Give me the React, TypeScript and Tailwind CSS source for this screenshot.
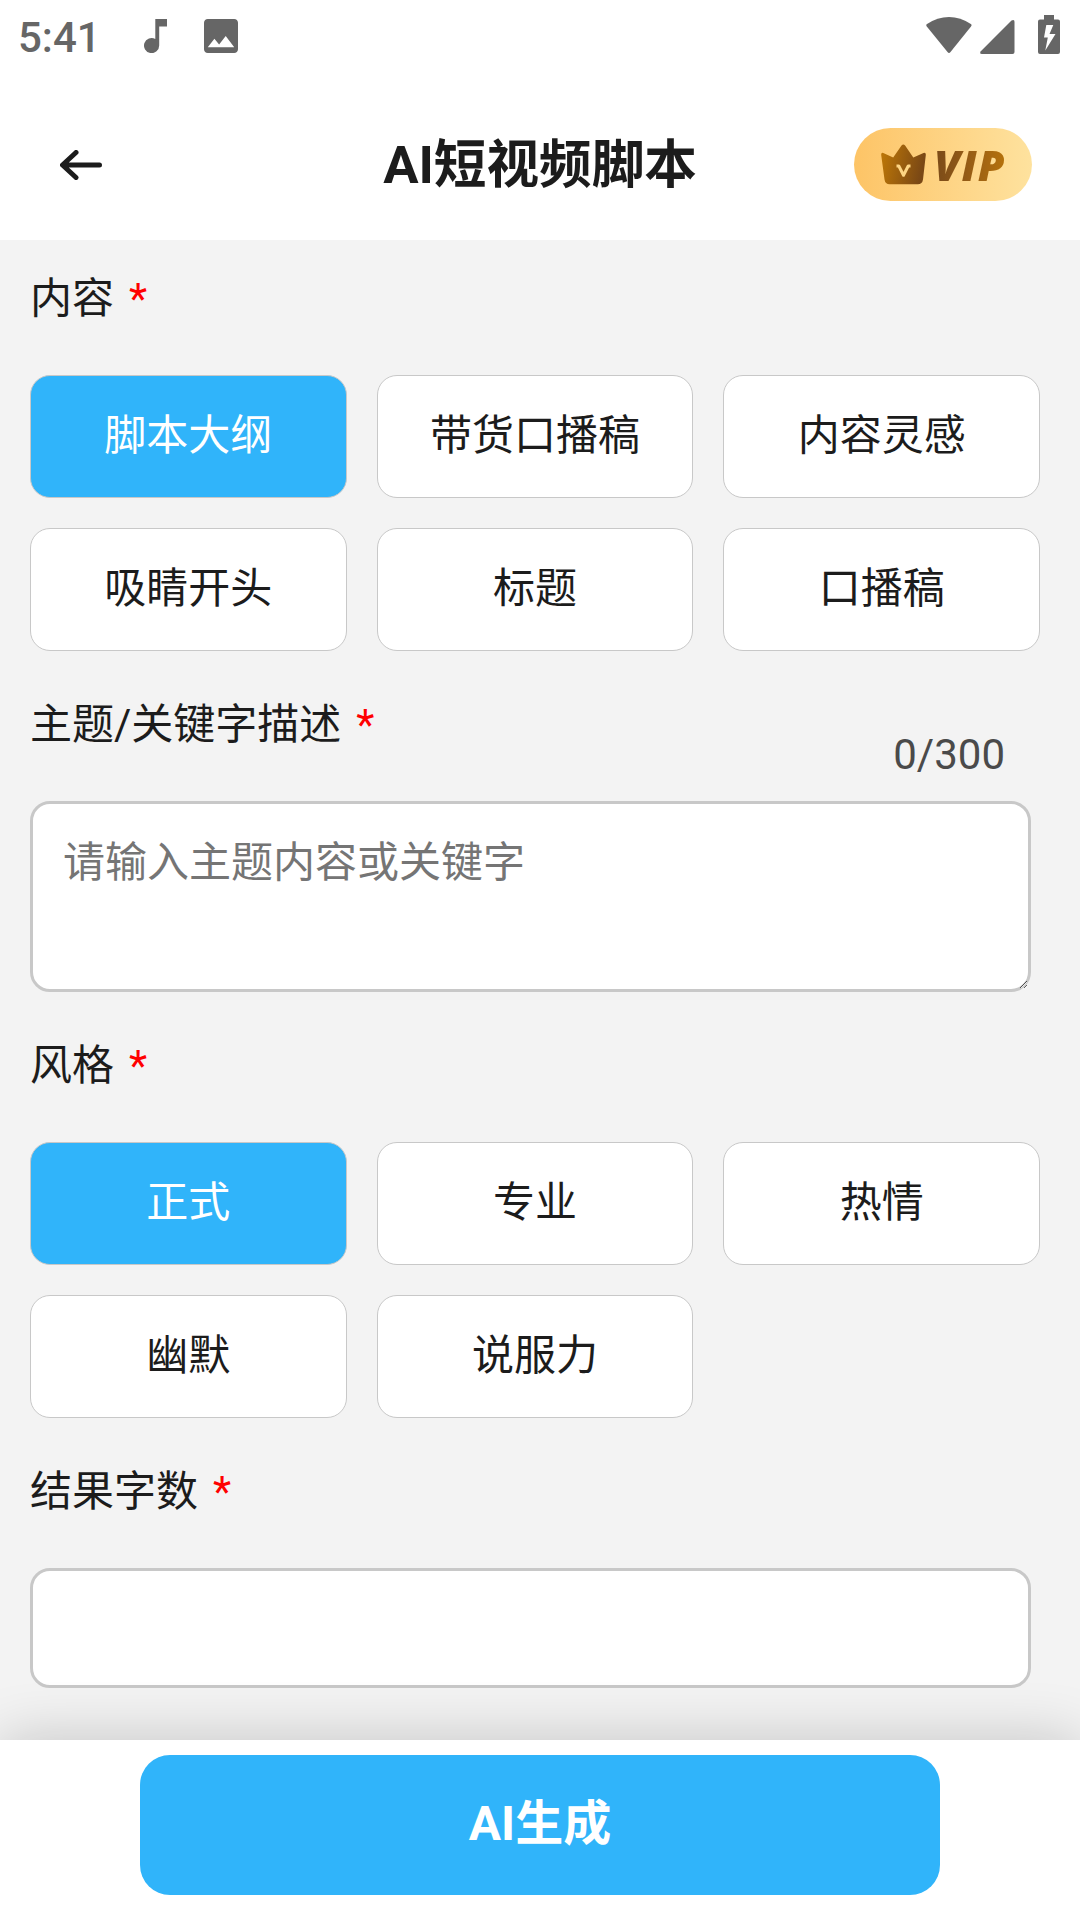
import clsx from "clsx";
import { useState } from "react";

const contentTypes = ["脚本大纲", "带货口播稿", "内容灵感", "吸睛开头", "标题", "口播稿"];
const styles = ["正式", "专业", "热情", "幽默", "说服力"];

const StatusBar = () => (
  <div className="flex h-[72px] items-start justify-between pl-[18px] pr-5 text-[#666666]">
    <div className="flex items-start">
      <p className="mt-[13px] text-[42px] font-medium leading-[49px]">5:41</p>
      <svg className="ml-[43px] mt-[19px]" width="23" height="34" viewBox="0 0 23 34" fill="currentColor">
        <path d="M11.3 0V19.9A7.6 7.6 0 1 0 15.2 26.5V7.6H23V0Z" />
      </svg>
      <svg className="ml-[37px] mt-[19px]" width="34" height="34" viewBox="3 3 18 18" fill="currentColor">
        <path d="M21 19V5c0-1.1-.9-2-2-2H5c-1.1 0-2 .9-2 2v14c0 1.1.9 2 2 2h14c1.1 0 2-.9 2-2zM8.5 13.5l2.5 3.01L14.5 12l4.5 6H5l3.5-4.5z" />
      </svg>
    </div>
    <div className="flex items-start">
      <svg className="mt-[17px]" width="46" height="36" viewBox="0 0 46 36" fill="currentColor">
        <path d="M.8 9.5Q-.4 8 1 7C14.5-2.3 31.5-2.3 44.8 7q1.4 1 .2 2.5L24.5 35q-1.5 1.8-3 0Z" />
      </svg>
      <svg className="ml-2 mt-5" width="35" height="34" viewBox="0 0 35 34" fill="currentColor">
        <path d="M31.5.6Q34.5-1 34.5 2V32q0 2-2 2H2Q-1 34 .8 31.2Z" />
      </svg>
      <svg className="ml-[23px] mt-[15px]" width="22" height="39" viewBox="0 0 22 39" fill="currentColor">
        <path
          fillRule="evenodd"
          d="M6 0h10v4.5h4q2 0 2 2V37q0 2-2 2H2q-2 0-2-2V6.5q0-2 2-2h4ZM8.3 10 6 22.5h3.8L7.3 35.5 17.5 19h-6L15.3 10Z"
        />
      </svg>
    </div>
  </div>
);

const VipBadge = () => (
  <div className="flex h-[73px] w-[178px] items-center rounded-full bg-gradient-to-r from-[#fdc466] to-[#fee29e] pl-[27px]">
    <svg className="shrink-0" width="45" height="41" viewBox="0 0 45 41">
      <defs>
        <linearGradient id="crown" x1="0" x2="1" y1="0" y2="0.2">
          <stop offset="0.1" stopColor="#b97408" />
          <stop offset="1" stopColor="#7a4815" />
        </linearGradient>
      </defs>
      <path
        fill="url(#crown)"
        d="M.2 11Q0 8.2 2.3 9L12.2 13.5 20.5 1.6q1.8-2.4 3.6 0L32.3 13.5 42.5 9Q45 8.2 44.8 11L42 35.5q-.7 4.8-5.2 4.8H8.6q-4.4 0-5.1-4.8Z"
      />
      <path d="M15.5 22h2.3l4.7 9.3L27.2 22h2.3" fill="none" stroke="#fdd584" strokeWidth="3" strokeLinejoin="round" />
    </svg>
    <span className="ml-2 bg-gradient-to-r from-[#7a4a18] to-[#b97408] bg-clip-text pr-1 font-['Open_Sans'] text-[43px] font-extrabold italic leading-[60px] tracking-[1px] text-transparent">
      VIP
    </span>
  </div>
);

const Label = ({ text }: { text: string }) => (
  <p className="h-[60px] text-[42px] leading-[60px]">
    {text}
    <span className="ml-[15px] text-[#ff0000]">*</span>
  </p>
);

type OptionsProps = {
  items: string[];
  value: string;
  onChange: (item: string) => void;
};

const Options = ({ items, value, onChange }: OptionsProps) => (
  <div className="grid w-[1010px] grid-cols-3 gap-[30px]">
    {items.map((item) => (
      <button
        key={item}
        onClick={() => onChange(item)}
        className={clsx(
          "h-[123px] cursor-pointer rounded-[20px] border border-[#c8c8c8] pb-[3px] text-[42px]",
          item === value ? "bg-[#30b4fa] text-white" : "bg-white"
        )}
      >
        {item}
      </button>
    ))}
  </div>
);

const App = () => {
  const [content, setContent] = useState(contentTypes[0]);
  const [style, setStyle] = useState(styles[0]);
  const [topic, setTopic] = useState("");
  const [count, setCount] = useState("");

  return (
    <div className="flex h-[1920px] w-[1080px] flex-col overflow-hidden bg-[#f3f3f3] font-[Roboto,'Noto_Sans_CJK_SC',sans-serif] text-[#1c1c1c]">
      <header className="h-60 bg-white">
        <StatusBar />
        <div className="grid h-[168px] grid-cols-[1fr_auto_1fr] items-center px-12 pt-[17px]">
          <svg className="ml-3" width="42" height="30" viewBox="0 0 42 30" fill="none" stroke="currentColor" strokeWidth="5" strokeLinecap="round" strokeLinejoin="round">
            <path d="M16 2.5 2.5 15 16 27.5M3 15h36.5" />
          </svg>
          <h1 className="text-[52.6px] font-bold leading-[76px]">AI短视频脚本</h1>
          <div className="flex justify-end">
            <VipBadge />
          </div>
        </div>
      </header>

      <main className="flex-1 pl-[30px] pt-[29px]">
        <Label text="内容" />
        <div className="mt-[46px]">
          <Options items={contentTypes} value={content} onChange={setContent} />
        </div>

        <div className="mt-11 flex w-[1001px] justify-between">
          <Label text="主题/关键字描述" />
          <span className="mr-[26px] mt-[35px] text-[42px] leading-[50px] text-[#4a4a4a]">{topic.length}/300</span>
        </div>
        <textarea
          className="mt-[21px] block h-[191px] w-[1001px] rounded-[20px] border-[3px] border-[#c8c8c8] bg-white px-[30px] py-[29px] text-[42px] leading-[60px] outline-none placeholder:text-[#757575]"
          placeholder="请输入主题内容或关键字"
          maxLength={300}
          value={topic}
          onChange={(e) => setTopic(e.target.value)}
        />

        <div className="mt-11">
          <Label text="风格" />
        </div>
        <div className="mt-[46px]">
          <Options items={styles} value={style} onChange={setStyle} />
        </div>

        <div className="mt-11">
          <Label text="结果字数" />
        </div>
        <input
          className="mt-[46px] block h-[120px] w-[1001px] rounded-[20px] border-[3px] border-[#c8c8c8] bg-white px-[30px] text-[42px] outline-none"
          value={count}
          onChange={(e) => setCount(e.target.value)}
        />
      </main>

      <footer className="relative flex h-[180px] justify-center bg-white pt-[15px] shadow-[0_0_60px_rgba(0,0,0,0.2)]">
        <button className="h-[140px] w-[800px] cursor-pointer rounded-[30px] bg-[#30b4fa] pb-0.5 text-5xl font-bold text-white">
          AI生成
        </button>
      </footer>
    </div>
  );
};

export default App;
